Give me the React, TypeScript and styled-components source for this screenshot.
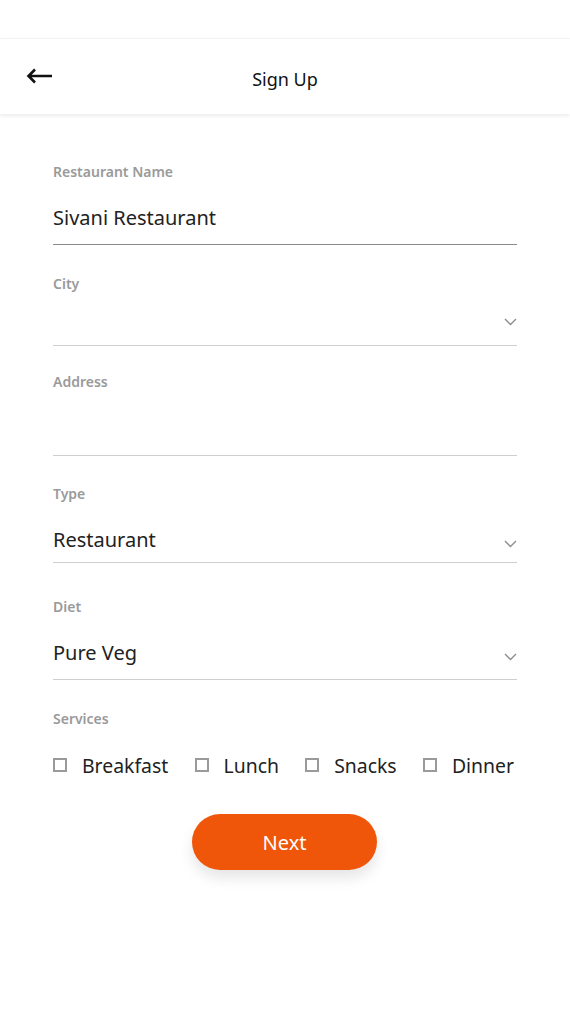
import React from "react";
import styled, { createGlobalStyle } from "styled-components";

const Global = createGlobalStyle`
  html, body { margin: 0; padding: 0; background: #ffffff; }
  body { font-family: "Noto Sans", "Open Sans", sans-serif; color: #1a1a1a; }
  * { box-sizing: border-box; }
`;

const Page = styled.div`
  width: 570px;
  min-height: 1016px;
  background: #fff;
  padding-top: 38px;
`;

const Header = styled.header`
  height: 76px;
  display: grid;
  grid-template-columns: 80px 1fr 80px;
  align-items: center;
  border-top: 1px solid #f3f3f3;
  box-shadow: 0 2px 4px rgba(0, 0, 0, 0.08);
  background: #fff;
`;

const BackButton = styled.button`
  border: 0;
  background: none;
  padding: 0 0 0 26px;
  height: 40px;
  display: flex;
  align-items: center;
  margin-top: -1px;
  cursor: pointer;
`;

const Title = styled.h1`
  margin: 0;
  text-align: center;
  font-size: 18px;
  font-weight: 400;
  color: #111;
  padding-top: 4px;
`;

const Form = styled.form`
  padding: 0 53px;
  display: flex;
  flex-direction: column;
`;

const Field = styled.div<{ $gap: number }>`
  padding-top: ${(p) => p.$gap}px;
  display: flex;
  flex-direction: column;
`;

const Label = styled.label`
  font-size: 14px;
  line-height: 20px;
  font-weight: 600;
  color: #9a9a9a;
`;

const InputRow = styled.div<{ $h: number; $pb: number; $strong?: boolean }>`
  height: ${(p) => p.$h}px;
  padding-bottom: ${(p) => p.$pb}px;
  display: flex;
  align-items: flex-end;
  justify-content: space-between;
  border-bottom: 1px solid ${(p) => (p.$strong ? "#8a8a8a" : "#cfcfcf")};
`;

const Value = styled.span`
  font-size: 20px;
  line-height: 28px;
  color: #222;
`;

const Chevron = styled.svg<{ $mb: number }>`
  width: 13px;
  height: 8px;
  margin-bottom: ${(p) => p.$mb}px;
  flex-shrink: 0;
`;

const Services = styled.div`
  display: flex;
  justify-content: space-between;
  align-items: center;
  margin-top: 22px;
  height: 28px;
  padding-right: 3px;
`;

const Option = styled.label`
  display: flex;
  align-items: center;
  gap: 15px;
  font-size: 19.4px;
  color: #222;
`;

const Box = styled.span`
  width: 14px;
  height: 14px;
  border: 2px solid #9a9a9a;
  display: inline-block;
`;

const ButtonWrap = styled.div`
  display: flex;
  justify-content: center;
  margin-top: 35px;
`;

const NextButton = styled.button`
  width: 185px;
  height: 56px;
  border-radius: 28px;
  border: 0;
  background: #f0560a;
  color: #fff;
  font-family: inherit;
  font-size: 20px;
  box-shadow: 0 8px 14px rgba(0, 0, 0, 0.1);
  margin-left: -1px;
`;

const ChevronIcon = ({ mb }: { mb: number }) => (
  <Chevron $mb={mb} viewBox="0 0 13 8">
    <polyline points="1,1 6.5,6.5 12,1" fill="none" stroke="#8c8c8c" strokeWidth="1.4" />
  </Chevron>
);

export default function App() {
  return (
    <Page>
      <Global />
      <Header>
        <BackButton aria-label="Back">
          <svg width="27" height="16" viewBox="0 0 27 16">
            <path d="M26 8H2.5M9 1.5L2.5 8l6.5 6.5" fill="none" stroke="#111" strokeWidth="2.6" strokeLinejoin="miter" />
          </svg>
        </BackButton>
        <Title>Sign Up</Title>
        <div />
      </Header>
      <Form>
        <Field $gap={48}>
          <Label>Restaurant Name</Label>
          <InputRow $h={63} $pb={12} $strong>
            <Value>Sivani Restaurant</Value>
          </InputRow>
        </Field>
        <Field $gap={29}>
          <Label>City</Label>
          <InputRow $h={52} $pb={20}>
            <span />
            <ChevronIcon mb={-1} />
          </InputRow>
        </Field>
        <Field $gap={26}>
          <Label>Address</Label>
          <InputRow $h={64} $pb={0} />
        </Field>
        <Field $gap={28}>
          <Label>Type</Label>
          <InputRow $h={59} $pb={8}>
            <Value>Restaurant</Value>
            <ChevronIcon mb={6} />
          </InputRow>
        </Field>
        <Field $gap={34}>
          <Label>Diet</Label>
          <InputRow $h={63} $pb={12}>
            <Value>Pure Veg</Value>
            <ChevronIcon mb={6} />
          </InputRow>
        </Field>
        <Field $gap={29}>
          <Label>Services</Label>
          <Services>
            {["Breakfast", "Lunch", "Snacks", "Dinner"].map((s) => (
              <Option key={s}>
                <Box />
                {s}
              </Option>
            ))}
          </Services>
        </Field>
        <ButtonWrap>
          <NextButton type="button">Next</NextButton>
        </ButtonWrap>
      </Form>
    </Page>
  );
}
